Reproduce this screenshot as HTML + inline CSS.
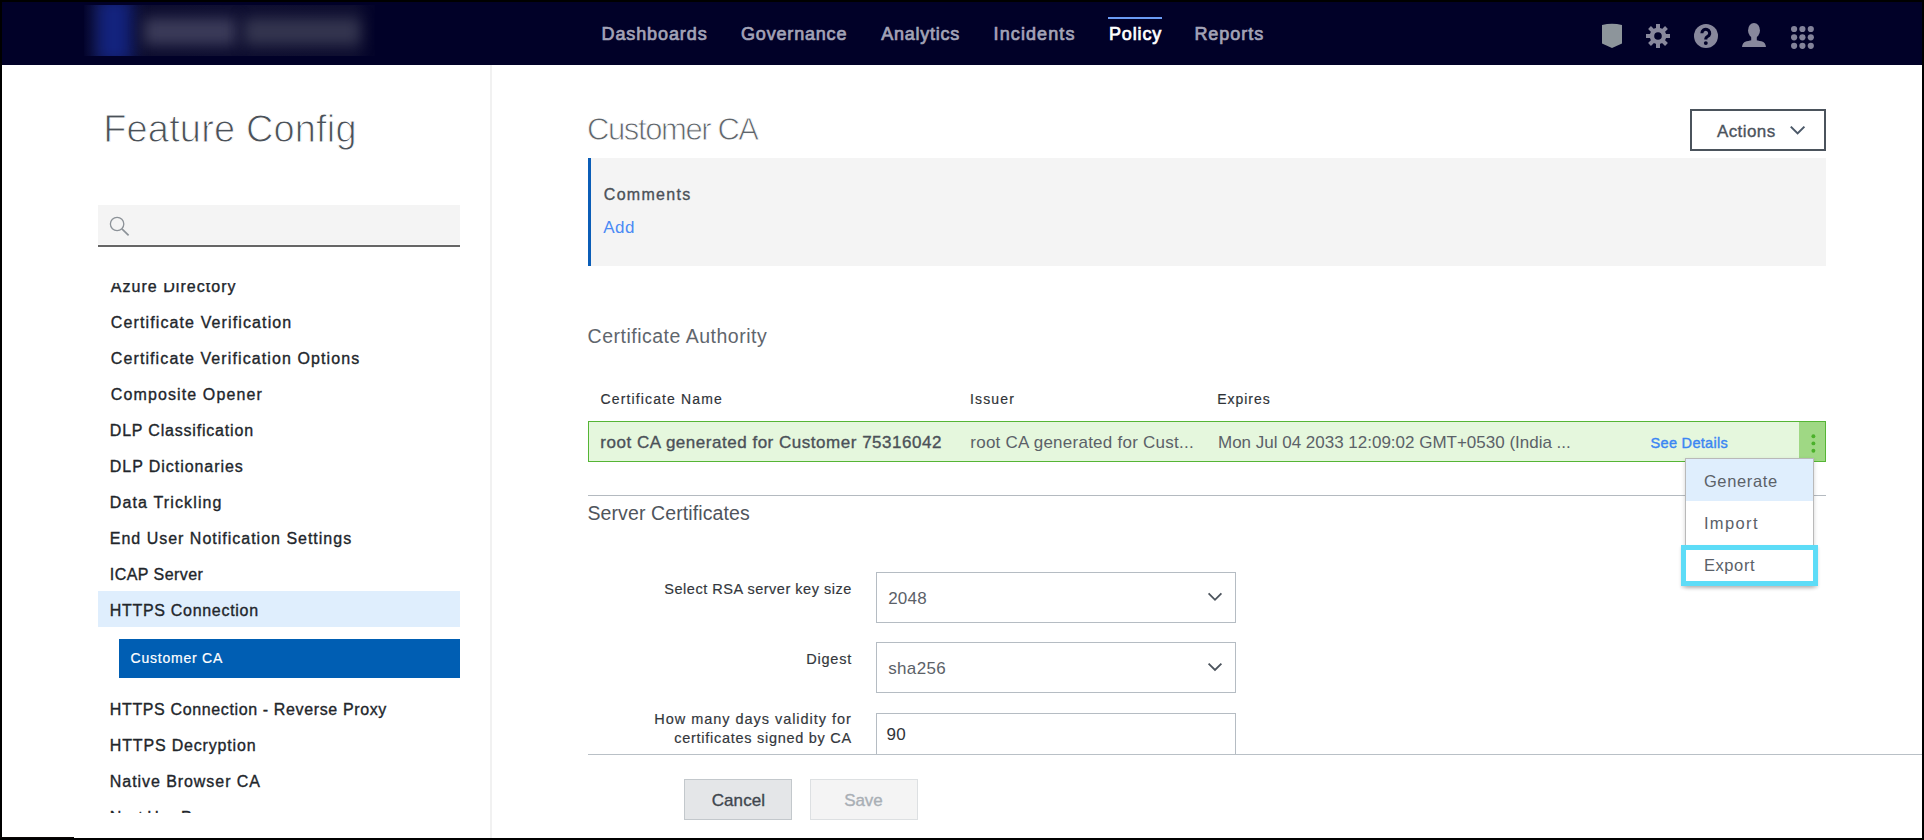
<!DOCTYPE html>
<html><head><meta charset="utf-8">
<style>
html,body{margin:0;padding:0;}
body{width:1924px;height:840px;position:relative;overflow:hidden;background:#fff;font-family:"Liberation Sans",sans-serif;}
.a{position:absolute;box-sizing:border-box;}
.t{position:absolute;line-height:1;white-space:nowrap;font-family:"Liberation Sans",sans-serif;}
#list{position:absolute;left:0;top:283px;width:490px;height:530px;overflow:hidden;}
</style></head>
<body>
<!-- header -->
<div class="a" style="left:0;top:0;width:1924px;height:65px;background:#010128;"></div>
<!-- logo (blurred) -->
<div class="a" style="left:84px;top:5px;width:291px;height:51px;background:linear-gradient(90deg,rgba(11,11,45,0.2) 0px,#0c0c2e 14px,#0e0e30 50%,#0d0d2f 270px,rgba(11,11,45,0.2) 291px);overflow:hidden;">
  <div class="a" style="left:12px;top:-8px;width:36px;height:67px;background:#13237e;filter:blur(8px);"></div>
  <div class="a" style="left:60px;top:13px;width:92px;height:27px;background:#3b3b59;filter:blur(7px);"></div>
  <div class="a" style="left:160px;top:13px;width:116px;height:27px;background:#34354f;filter:blur(7px);"></div>
</div>
<!-- nav indicator -->
<div class="a" style="left:1108px;top:17px;width:54px;height:2px;background:#6b9cf5;"></div>
<!-- header icons -->
<svg class="a" style="left:1596px;top:16px;" width="240" height="40" viewBox="1596 16 240 40">
  <path d="M1602 25 Q1612 22.5 1622 25 L1622 43.5 L1612 48 L1602 43.5 Z" fill="#8d959b"/>
  <g fill="#88889c" transform="translate(1658 36)"><circle r="8.3"/><rect x="-2" y="-12" width="4" height="6" transform="rotate(0)"/><rect x="-2" y="-12" width="4" height="6" transform="rotate(45)"/><rect x="-2" y="-12" width="4" height="6" transform="rotate(90)"/><rect x="-2" y="-12" width="4" height="6" transform="rotate(135)"/><rect x="-2" y="-12" width="4" height="6" transform="rotate(180)"/><rect x="-2" y="-12" width="4" height="6" transform="rotate(225)"/><rect x="-2" y="-12" width="4" height="6" transform="rotate(270)"/><rect x="-2" y="-12" width="4" height="6" transform="rotate(315)"/></g>
  <circle cx="1658" cy="36" r="3.8" fill="#010128"/>
  <circle cx="1706" cy="36" r="12" fill="#88889c"/>
  <path d="M1701.9 33.2 a3.9 3.9 0 1 1 7.1 2.2 c-1.0 1.0 -3.2 1.6 -3.2 3.4 v0.8" fill="none" stroke="#010128" stroke-width="3.1"/>
  <circle cx="1705.8" cy="43.1" r="1.95" fill="#010128"/>
  <g fill="#88889c">
    <ellipse cx="1754" cy="30.4" rx="5.95" ry="7.5"/>
    <rect x="1751.2" y="35" width="5.6" height="6.5"/>
    <path d="M1742 47 c0.3 -3 1.6 -4.9 4.6 -5.7 c2.4 -0.7 4.4 -1.1 7.4 -1.1 c3 0 5 0.4 7.4 1.1 c3 0.8 4.3 2.7 4.6 5.7 Z"/>
  </g>
  <g fill="#83839a">
    <circle cx="1794.1" cy="29" r="3.1"/><circle cx="1802.4" cy="29" r="3.1"/><circle cx="1810.8" cy="29" r="3.1"/>
    <circle cx="1794.1" cy="37.3" r="3.1"/><circle cx="1802.4" cy="37.3" r="3.1"/><circle cx="1810.8" cy="37.3" r="3.1"/>
    <circle cx="1794.1" cy="45.8" r="3.1"/><circle cx="1802.4" cy="45.8" r="3.1"/><circle cx="1810.8" cy="45.8" r="3.1"/>
  </g>
</svg>

<!-- sidebar divider -->
<div class="a" style="left:490px;top:65px;width:2px;height:775px;background:#f1f1f1;"></div>
<!-- search -->
<div class="a" style="left:98px;top:205px;width:362px;height:39px;background:#f4f4f4;"></div>
<div class="a" style="left:98px;top:244px;width:362px;height:1px;background:#f9f9f9;"></div>
<div class="a" style="left:98px;top:245px;width:362px;height:2px;background:#666;"></div>
<svg class="a" style="left:98px;top:205px;" width="40" height="40" viewBox="98 205 40 40">
  <circle cx="117.1" cy="224" r="6.7" fill="none" stroke="#8c9298" stroke-width="1.3"/>
  <path d="M121.9 228.9 L128.6 235.4" stroke="#8c9298" stroke-width="1.7"/>
</svg>
<div id="list">
  <div class="a" style="left:98px;top:308px;width:362px;height:36px;background:#dfeefd;"></div>
  <div class="a" style="left:119px;top:356px;width:341px;height:39px;background:#005eb3;"></div>
  <div class="t" id="t7" style="top:-4.24px;left:110.80px;font-size:16.00px;font-weight:400;-webkit-text-stroke:0.35px #22262b;color:#22262b;letter-spacing:1.036px;">Azure Directory</div>
  <div class="t" id="t8" style="top:31.76px;left:110.80px;font-size:16.00px;font-weight:400;-webkit-text-stroke:0.35px #22262b;color:#22262b;letter-spacing:1.117px;">Certificate Verification</div>
  <div class="t" id="t9" style="top:67.76px;left:110.80px;font-size:16.00px;font-weight:400;-webkit-text-stroke:0.35px #22262b;color:#22262b;letter-spacing:1.100px;">Certificate Verification Options</div>
  <div class="t" id="t10" style="top:103.76px;left:110.80px;font-size:16.00px;font-weight:400;-webkit-text-stroke:0.35px #22262b;color:#22262b;letter-spacing:1.113px;">Composite Opener</div>
  <div class="t" id="t11" style="top:139.76px;left:109.80px;font-size:16.00px;font-weight:400;-webkit-text-stroke:0.35px #22262b;color:#22262b;letter-spacing:0.806px;">DLP Classification</div>
  <div class="t" id="t12" style="top:175.76px;left:109.80px;font-size:16.00px;font-weight:400;-webkit-text-stroke:0.35px #22262b;color:#22262b;letter-spacing:0.940px;">DLP Dictionaries</div>
  <div class="t" id="t13" style="top:211.76px;left:109.80px;font-size:16.00px;font-weight:400;-webkit-text-stroke:0.35px #22262b;color:#22262b;letter-spacing:1.138px;">Data Trickling</div>
  <div class="t" id="t14" style="top:247.76px;left:109.80px;font-size:16.00px;font-weight:400;-webkit-text-stroke:0.35px #22262b;color:#22262b;letter-spacing:0.993px;">End User Notification Settings</div>
  <div class="t" id="t15" style="top:283.76px;left:109.80px;font-size:16.00px;font-weight:400;-webkit-text-stroke:0.35px #22262b;color:#22262b;letter-spacing:0.450px;">ICAP Server</div>
  <div class="t" id="t16" style="top:319.76px;left:109.80px;font-size:16.00px;font-weight:400;-webkit-text-stroke:0.35px #22262b;color:#22262b;letter-spacing:0.693px;">HTTPS Connection</div>
  <div class="t" id="t17" style="top:367.95px;left:130.60px;font-size:14.00px;font-weight:400;-webkit-text-stroke:0.20px #ffffff;color:#ffffff;letter-spacing:0.770px;">Customer CA</div>
  <div class="t" id="t18" style="top:419.06px;left:109.80px;font-size:16.00px;font-weight:400;-webkit-text-stroke:0.35px #22262b;color:#22262b;letter-spacing:0.632px;">HTTPS Connection - Reverse Proxy</div>
  <div class="t" id="t19" style="top:455.06px;left:109.80px;font-size:16.00px;font-weight:400;-webkit-text-stroke:0.35px #22262b;color:#22262b;letter-spacing:0.827px;">HTTPS Decryption</div>
  <div class="t" id="t20" style="top:491.06px;left:109.80px;font-size:16.00px;font-weight:400;-webkit-text-stroke:0.35px #22262b;color:#22262b;letter-spacing:0.938px;">Native Browser CA</div>
  <div class="t" id="t21" style="top:527.06px;left:109.80px;font-size:16.00px;font-weight:400;-webkit-text-stroke:0.35px #22262b;color:#22262b;letter-spacing:0.000px;">Next Hop Proxy</div>
</div>

<!-- main -->
<div class="a" style="left:1690px;top:109px;width:136px;height:42px;border:2px solid #4b535c;"></div>
<svg class="a" style="left:1786px;top:120px;" width="24" height="20" viewBox="1786 120 24 20">
  <path d="M1790.8 126.6 L1797.6 133.4 L1804.4 126.6" fill="none" stroke="#4b5868" stroke-width="2"/>
</svg>
<div class="a" style="left:588px;top:158px;width:1238px;height:108px;background:#f4f4f4;border-left:3px solid #0b5db7;"></div>

<div class="a" style="left:588px;top:421px;width:1238px;height:41px;background:#e5f7dd;border:1px solid #55b535;"></div>
<div class="a" style="left:1799px;top:422px;width:26px;height:39px;background:#9fd884;"></div>
<svg class="a" style="left:1799px;top:422px;" width="26" height="39" viewBox="1799 422 26 39">
  <g fill="#4bb12b"><circle cx="1813.4" cy="436.3" r="1.95"/><circle cx="1813.4" cy="443.4" r="1.95"/><circle cx="1813.4" cy="450.7" r="1.95"/></g>
</svg>
<div class="a" style="left:588px;top:495px;width:1238px;height:1px;background:#b4bac0;"></div>

<!-- dropdown -->
<div class="a" style="left:1685px;top:458px;width:129px;height:128px;background:#fff;border:1px solid #b9b9b9;box-shadow:0 2px 4px rgba(0,0,0,0.18);"></div>
<div class="a" style="left:1686px;top:459px;width:127px;height:42px;background:#dfeefd;"></div>
<div class="a" style="left:1681px;top:545px;width:137px;height:41px;border:5px solid #5ddcf7;box-shadow:0 2px 3px rgba(0,0,0,0.15);"></div>

<!-- form -->
<div class="a" style="left:876px;top:572px;width:360px;height:51px;border:1px solid #b5bcc3;"></div>
<div class="a" style="left:876px;top:642px;width:360px;height:51px;border:1px solid #b5bcc3;"></div>
<svg class="a" style="left:1200px;top:580px;" width="30" height="100" viewBox="1200 580 30 100">
  <path d="M1208.6 593.4 L1215 599.8 L1221.4 593.4" fill="none" stroke="#4b535c" stroke-width="1.8"/>
  <path d="M1208.6 663.6 L1215 670 L1221.4 663.6" fill="none" stroke="#4b535c" stroke-width="1.8"/>
</svg>
<div class="a" style="left:876px;top:713px;width:360px;height:42px;border:1px solid #b5bcc3;border-bottom:none;"></div>
<div class="a" style="left:588px;top:754px;width:1336px;height:1px;background:#b9c0c6;"></div>
<div class="a" style="left:684px;top:779px;width:108px;height:41px;background:#e4e6e8;border:1px solid #c3c8cc;"></div>
<div class="a" style="left:810px;top:779px;width:108px;height:41px;background:#f4f4f4;border:1px solid #dde0e2;"></div>

<div class="t" id="t0" style="top:24.76px;left:601.50px;font-size:18.00px;font-weight:400;-webkit-text-stroke:0.7px #a3a3b7;color:#a3a3b7;letter-spacing:0.900px;">Dashboards</div>
<div class="t" id="t1" style="top:24.76px;left:741.00px;font-size:18.00px;font-weight:400;-webkit-text-stroke:0.7px #a3a3b7;color:#a3a3b7;letter-spacing:0.822px;">Governance</div>
<div class="t" id="t2" style="top:24.76px;left:881.20px;font-size:18.00px;font-weight:400;-webkit-text-stroke:0.7px #a3a3b7;color:#a3a3b7;letter-spacing:0.750px;">Analytics</div>
<div class="t" id="t3" style="top:24.76px;left:993.60px;font-size:18.00px;font-weight:400;-webkit-text-stroke:0.7px #a3a3b7;color:#a3a3b7;letter-spacing:1.100px;">Incidents</div>
<div class="t" id="t4" style="top:24.76px;left:1108.90px;font-size:18.00px;font-weight:400;-webkit-text-stroke:0.7px #ffffff;color:#ffffff;letter-spacing:0.880px;">Policy</div>
<div class="t" id="t5" style="top:24.76px;left:1194.40px;font-size:18.00px;font-weight:400;-webkit-text-stroke:0.7px #a3a3b7;color:#a3a3b7;letter-spacing:0.967px;">Reports</div>
<div class="t" id="t6" style="top:109.63px;left:103.20px;font-size:38.00px;font-weight:400;-webkit-text-stroke:0.99px #ffffff;color:#4b5158;letter-spacing:0.154px;">Feature Config</div>
<div class="t" id="t22" style="top:114.16px;left:587.00px;font-size:31.00px;font-weight:400;-webkit-text-stroke:0.81px #ffffff;color:#5f656b;letter-spacing:-1.400px;">Customer CA</div>
<div class="t" id="t23" style="top:122.61px;left:1716.90px;font-size:17.00px;font-weight:400;-webkit-text-stroke:0.35px #4b535c;color:#4b535c;letter-spacing:0.417px;">Actions</div>
<div class="t" id="t24" style="top:186.66px;left:603.80px;font-size:16.00px;font-weight:400;-webkit-text-stroke:0.35px #4b5158;color:#4b5158;letter-spacing:1.300px;">Comments</div>
<div class="t" id="t25" style="top:218.61px;left:603.20px;font-size:17.00px;font-weight:400;color:#4a8af4;letter-spacing:0.450px;">Add</div>
<div class="t" id="t26" style="top:327.29px;left:587.60px;font-size:19.50px;font-weight:400;color:#5f666d;letter-spacing:0.500px;">Certificate Authority</div>
<div class="t" id="t27" style="top:392.15px;left:600.60px;font-size:14.00px;font-weight:400;-webkit-text-stroke:0.18px #2f3338;color:#2f3338;letter-spacing:1.127px;">Certificate Name</div>
<div class="t" id="t28" style="top:392.15px;left:969.90px;font-size:14.00px;font-weight:400;-webkit-text-stroke:0.18px #2f3338;color:#2f3338;letter-spacing:1.180px;">Issuer</div>
<div class="t" id="t29" style="top:392.15px;left:1217.20px;font-size:14.00px;font-weight:400;-webkit-text-stroke:0.18px #2f3338;color:#2f3338;letter-spacing:0.967px;">Expires</div>
<div class="t" id="t30" style="top:434.11px;left:600.30px;font-size:17.00px;font-weight:400;-webkit-text-stroke:0.35px #4b5158;color:#4b5158;letter-spacing:0.521px;">root CA generated for Customer 75316042</div>
<div class="t" id="t31" style="top:434.11px;left:970.30px;font-size:17.00px;font-weight:400;color:#5b6168;letter-spacing:0.250px;">root CA generated for Cust...</div>
<div class="t" id="t32" style="top:434.11px;left:1218.00px;font-size:17.00px;font-weight:400;color:#5b6168;letter-spacing:-0.005px;">Mon Jul 04 2033 12:09:02 GMT+0530 (India ...</div>
<div class="t" id="t33" style="top:436.23px;left:1650.60px;font-size:14.50px;font-weight:400;-webkit-text-stroke:0.4px #3b86f3;color:#3b86f3;letter-spacing:0.300px;">See Details</div>
<div class="t" id="t34" style="top:504.09px;left:587.40px;font-size:19.50px;font-weight:400;color:#4f555c;letter-spacing:0.111px;">Server Certificates</div>
<div class="t" id="t35" style="top:472.63px;left:1703.90px;font-size:16.50px;font-weight:400;color:#5b6168;letter-spacing:0.643px;">Generate</div>
<div class="t" id="t36" style="top:514.63px;left:1703.90px;font-size:16.50px;font-weight:400;color:#5b6168;letter-spacing:1.380px;">Import</div>
<div class="t" id="t37" style="top:556.53px;left:1703.90px;font-size:16.50px;font-weight:400;color:#5b6168;letter-spacing:0.600px;">Export</div>
<div class="t" id="t38" style="top:581.93px;right:1072.11px;font-size:14.50px;font-weight:400;-webkit-text-stroke:0.18px #33373c;color:#33373c;letter-spacing:0.520px;">Select RSA server key size</div>
<div class="t" id="t39" style="top:651.93px;right:1072.03px;font-size:14.50px;font-weight:400;-webkit-text-stroke:0.18px #33373c;color:#33373c;letter-spacing:0.760px;">Digest</div>
<div class="t" id="t40" style="top:711.93px;right:1072.28px;font-size:14.50px;font-weight:400;-webkit-text-stroke:0.18px #33373c;color:#33373c;letter-spacing:0.960px;">How many days validity for</div>
<div class="t" id="t41" style="top:731.43px;right:1072.09px;font-size:14.50px;font-weight:400;-webkit-text-stroke:0.18px #33373c;color:#33373c;letter-spacing:0.721px;">certificates signed by CA</div>
<div class="t" id="t42" style="top:589.81px;left:888.20px;font-size:17.00px;font-weight:400;color:#5b6168;letter-spacing:0.200px;">2048</div>
<div class="t" id="t43" style="top:659.81px;left:888.20px;font-size:17.00px;font-weight:400;color:#5b6168;letter-spacing:0.360px;">sha256</div>
<div class="t" id="t44" style="top:725.61px;left:886.40px;font-size:17.00px;font-weight:400;color:#2f3338;letter-spacing:0.400px;">90</div>
<div class="t" id="t45" style="top:792.01px;left:711.70px;font-size:17.00px;font-weight:400;-webkit-text-stroke:0.35px #3f464e;color:#3f464e;letter-spacing:0.100px;">Cancel</div>
<div class="t" id="t46" style="top:792.01px;left:844.30px;font-size:17.00px;font-weight:400;-webkit-text-stroke:0.35px #a9afb5;color:#a9afb5;letter-spacing:-0.133px;">Save</div>

<!-- screen borders -->
<div class="a" style="left:0;top:0;width:1924px;height:2px;background:#000;"></div>
<div class="a" style="left:0;top:0;width:2px;height:840px;background:#000;"></div>
<div class="a" style="left:1922px;top:0;width:2px;height:840px;background:#000;"></div>
<div class="a" style="left:0;top:838px;width:1924px;height:2px;background:#000;"></div>
<div class="a" style="left:0;top:837px;width:74px;height:1px;background:#0a0604;"></div>
</body></html>
